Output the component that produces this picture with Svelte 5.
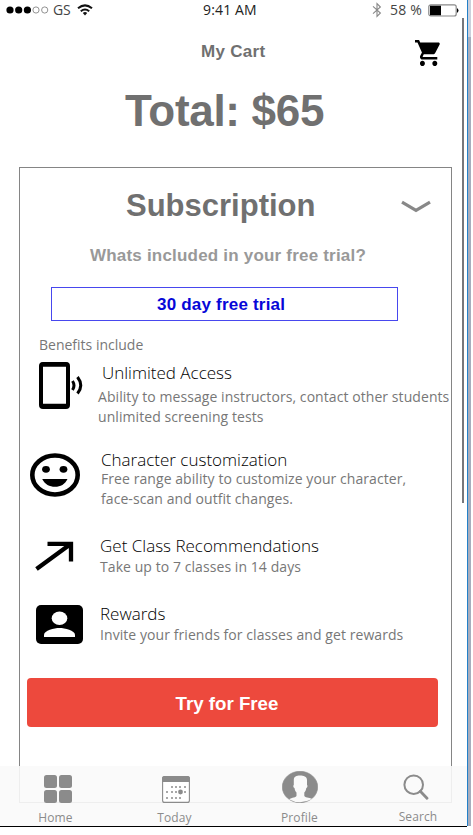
<script>
  const benefits = [
    { icon: 'phone', title: 'Unlimited Access', lines: ['Ability to message instructors, contact other students', 'unlimited screening tests'] },
    { icon: 'smile', title: 'Character customization', lines: ['Free range ability to customize your character,', 'face-scan and outfit changes.'] },
    { icon: 'arrow', title: 'Get Class Recommendations', lines: ['Take up to 7 classes in 14 days'] },
    { icon: 'person', title: 'Rewards', lines: ['Invite your friends for classes and get rewards'] }
  ];
  const dots = [[10,11],[14,11],[18,11],[23,11],[5,16],[10,16],[14,16],[23,16],[5,22],[10,22],[14,22],[18,22]];
</script>

<div class="frame">
  <main class="screen">
    <div class="status">
      <div class="carrier">
        <svg width="43" height="8" viewBox="0 0 43 8"><g fill="#000"><circle cx="4" cy="4" r="3.6"/><circle cx="12.7" cy="4" r="3.6"/><circle cx="21.4" cy="4" r="3.6"/></g><g fill="#fff" stroke="#777" stroke-width=".8"><circle cx="30" cy="4" r="3.1"/><circle cx="38.7" cy="4" r="3.1"/></g></svg>
        <span>GS</span>
        <svg width="16" height="12" viewBox="0 0 16 12" fill="none" stroke="#111" stroke-width="2"><path d="M1 4.3Q8-1.6 15 4.3M3.8 7.2Q8 3.7 12.2 7.2"/><path d="M5.8 9Q8 7.2 10.2 9L8 11.5Z" fill="#111" stroke="none"/></svg>
      </div>
      <span class="time">9:41 AM</span>
      <div class="power">
        <svg width="10" height="16" viewBox="0 0 10 16" fill="none" stroke="#888" stroke-width="1.1"><path d="M1 4.4L8.4 11 5 14.5V1.5L8.4 5 1 11.6"/></svg>
        <span>58 %</span>
        <svg width="31" height="13" viewBox="0 0 31 13"><rect x=".8" y=".8" width="27.4" height="11.2" rx="2" fill="#fff" stroke="#888" stroke-width="1.2"/><path d="M2 1.7h11v9.6H2z"/><path d="M29 4q3 2.4 0 5z"/></svg>
      </div>
    </div>
    <header>
      <h1>My Cart</h1>
      <svg class="cart" width="26" height="26" viewBox="1 2 21 20" preserveAspectRatio="none"><path d="M7 18c-1.1 0-1.99.9-1.99 2S5.9 22 7 22s2-.9 2-2-.9-2-2-2zM1 2v2h2l3.6 7.59-1.35 2.45c-.16.28-.25.61-.25.96 0 1.1.9 2 2 2h12v-2H7.42c-.14 0-.25-.11-.25-.25l.03-.12.9-1.63h7.45c.75 0 1.41-.41 1.75-1.03l3.58-6.49c.08-.14.12-.31.12-.48 0-.55-.45-1-1-1H5.21l-.94-2H1zm16 16c-1.1 0-1.99.9-1.99 2s.89 2 1.99 2 2-.9 2-2-.9-2-2-2z"/></svg>
    </header>
    <div class="total">Total: $65</div>

    <section class="card">
      <div class="heading">
        <h2>Subscription</h2>
        <svg width="30" height="14" viewBox="0 0 30 14"><path d="M1 2.2L15 10.5 29 2.2" fill="none" stroke="#888" stroke-width="3.2"/></svg>
      </div>
      <p class="question">Whats included in your free trial?</p>
      <div class="trial"><span>30 day free trial</span></div>
      <p class="include">Benefits include</p>
      {#each benefits as b}
        <article class={b.icon}>
          <div class="icon">
            {#if b.icon === 'phone'}
              <svg width="46" height="49" viewBox="0 0 46 49"><rect x="3" y="3" width="27" height="43" rx="2" fill="none" stroke="#000" stroke-width="4"/><path d="M3 1.7h27v4H3zM3 42.7h27v4H3z"/><path d="M34.5 20q3 4.5 0 9M39.5 16q6.5 8.5 0 16.5" fill="none" stroke="#000" stroke-width="3"/></svg>
            {:else if b.icon === 'smile'}
              <svg width="50" height="44" viewBox="0 0 50 44"><ellipse cx="25" cy="22" rx="22.7" ry="19.5" fill="none" stroke="#000" stroke-width="4.6"/><ellipse cx="16" cy="16.3" rx="3.9" ry="3.4"/><ellipse cx="33.5" cy="16.3" rx="3.9" ry="3.4"/><path d="M12.2 26h25.3C35 31.3 30.5 33.8 25 33.8S14.8 31.3 12.2 26z"/></svg>
            {:else if b.icon === 'arrow'}
              <svg width="39" height="30" viewBox="0 0 39 30"><path d="M12.5 2.8H36V20.5M36 2.8L1.5 28" fill="none" stroke="#000" stroke-width="4.3"/></svg>
            {:else}
              <svg width="47" height="39" viewBox="0 0 47 39"><rect width="47" height="39" rx="5"/><ellipse cx="23.5" cy="13.3" rx="7.8" ry="6.8" fill="#fff"/><path d="M8 32v-2.2C8 25.5 18.3 23 23.5 23S39 25.5 39 29.8V32z" fill="#fff"/></svg>
            {/if}
          </div>
          <div class="copy">
            <h3>{b.title}</h3>
            {#each b.lines as line}<p>{line}</p>{/each}
          </div>
        </article>
      {/each}
      <button>Try for Free</button>
    </section>

    <nav>
      <div class="tab home">
        <svg width="28" height="28" viewBox="0 0 28 28" fill="#8b8b8b"><rect width="13" height="13" rx="2.5"/><rect x="15" width="13" height="13" rx="2.5"/><rect y="15" width="13" height="13" rx="2.5"/><rect x="15" y="15" width="13" height="13" rx="2.5"/></svg>
        <span>Home</span>
      </div>
      <div class="tab today">
        <svg width="28" height="27" viewBox="0 0 28 27" fill="#8b8b8b"><rect x=".6" y=".6" width="26.8" height="25.8" rx="2" fill="#fff" stroke="#8b8b8b" stroke-width="1.1"/><path d="M0 2.5Q0 0 2.5 0h23Q28 0 28 2.5V6H0z"/>{#each dots as [x, y]}<circle cx={x} cy={y} r="1"/>{/each}<circle cx="18.5" cy="16" r="2.4"/></svg>
        <span>Today</span>
      </div>
      <div class="tab profile">
        <svg width="36" height="32" viewBox="0 0 36 32"><ellipse cx="18" cy="16" rx="17.7" ry="15.7" fill="#8b8b8b" stroke="#8b8b8b" stroke-width=".6"/><path d="M11.8 9C11.8 5.6 14.5 4.5 18 4.5S25 5.6 25 9v5c.8 0 .5 3-.7 3-.3 2-1 3.5-2 4.5v3.2c0 1.8 5 1.7 7.8 3.3Q24 31.2 18 31.2T7 28.2c2.8-1.8 7.5-1.6 7.5-3.5v-3.2c-1-1-1.7-2.5-2-4.5-1.2 0-1.5-3-.7-3z" fill="#fafafa"/></svg>
        <span>Profile</span>
      </div>
      <div class="tab search">
        <svg width="26" height="26" viewBox="0 0 26 26" fill="none" stroke="#8b8b8b"><circle cx="10.7" cy="10.7" r="9.3" stroke-width="2"/><path d="M17.3 17.3L24 24.3" stroke-width="2.8" stroke-linecap="round"/></svg>
        <span>Search</span>
      </div>
    </nav>
    <div class="scrollbar"></div>
  </main>
  <aside></aside>
</div>

<style>
  :global(body) { background: #fff; }
  h1, h2, h3, p { margin: 0; font-weight: normal; }
  svg { display: block; flex: none; }
  .frame { display: flex; width: 471px; height: 827px; }
  .screen { position: relative; box-sizing: border-box; width: 467px; height: 827px; border-bottom: 1px solid #000; background: #fff; font-family: "Open Sans", "Noto Sans", sans-serif; white-space: nowrap; overflow: hidden; }
  aside { box-sizing: border-box; width: 4px; height: 826px; border-left: 1px solid #2380c8; background: linear-gradient(#cbd0dc 37px, #a7adbd 37px); }
  .status { display: flex; height: 20px; font-size: 14px; line-height: 20px; }
  .carrier { display: flex; align-items: center; width: 203px; padding-left: 6px; box-sizing: border-box; color: #444; }
  .carrier span { width: 24px; margin-left: 4px; letter-spacing: -.1px; }
  .time { width: 169px; color: #222; letter-spacing: .15px; }
  .power { display: flex; align-items: center; color: #444; }
  .power span { width: 38px; margin-left: 8px; letter-spacing: .2px; }
  header { display: flex; height: 64px; }
  h1 { width: 213px; padding-left: 201px; font: bold 17px/64px "Liberation Sans", sans-serif; letter-spacing: .3px; color: #707070; }
  .cart { margin: 20px 0 0 1px; }
  .total { height: 83px; padding-left: 125px; font: bold 44px/53px "Liberation Sans", sans-serif; color: #707070; letter-spacing: -.3px; }
  .card { box-sizing: border-box; width: 433px; height: 636px; margin-left: 19px; border: 1px solid #858585; }
  .heading { display: flex; height: 72px; align-items: center; padding-left: 106px; }
  h2 { width: 275px; font: bold 31px/72px "Liberation Sans", sans-serif; color: #707070; padding-top: 3px; }
  .heading svg { margin-top: 5px; }
  .question { height: 47px; padding-left: 70px; font: bold 17px/31px "Liberation Sans", sans-serif; color: #999; letter-spacing: .2px; }
  .trial { box-sizing: border-box; width: 347px; height: 34px; margin-left: 31px; padding-left: 105px; border: 1px solid #4747ee; font: bold 17px/34px "Liberation Sans", sans-serif; color: #0707d8; letter-spacing: .2px; }
  .include { height: 40px; padding-left: 19px; font-size: 14px; line-height: 47px; color: #777; letter-spacing: 0; }
  article { display: flex; box-sizing: border-box; }
  .icon { width: 81px; flex: none; box-sizing: border-box; }
  h3 { font-size: 17px; line-height: 22px; color: #000; font-weight: 300; }
  .copy p { font-size: 14px; line-height: 20px; color: #777; letter-spacing: .07px; }
  .phone { height: 92px; }
  .phone .icon { padding-left: 18px; width: 78px; }
  .phone h3 { padding-left: 4px; height: 25px; }
  .phone .copy { margin-top: 1px; }
  .smile { height: 85px; }
  .smile .icon { padding: 0 0 0 10px; }
  .smile .copy { margin-top: -4px; }
  .smile h3 { height: 20px; }
  .arrow { height: 67px; }
  .arrow .icon { padding: 3px 0 0 15px; width: 80px; }
  .arrow .copy { margin-top: -3px; }
  .arrow h3, .person h3 { height: 22px; }
  .person { height: 73px; }
  .person .icon { padding: 0 0 0 16px; width: 80px; }
  .person .copy { margin-top: -2px; }
  button { display: block; width: 411px; height: 49px; margin-left: 7px; padding: 2px 11px 0 0; border: 0; border-radius: 4px; background: #ed493d; color: #fff; font: bold 18.7px/47px "Liberation Sans", sans-serif; }
  nav { position: absolute; left: 0; right: 0; bottom: 0; height: 60px; display: flex; background: rgba(249, 249, 249, .9); }
  .tab { display: flex; flex: none; flex-direction: column; align-items: center; font-size: 12px; line-height: 16px; color: #8b8b8b; letter-spacing: .1px; }
  .tab span { margin-top: 7px; }
  .home { width: 111px; }
  .home svg { margin: 9px 0 0 4px; }
  .today { width: 127px; }
  .today svg { margin: 10px 0 0 3px; }
  .profile { width: 123px; }
  .profile svg { margin: 5px 0 0 1px; }
  .search { width: 114px; }
  .search svg { margin: 8px 5px 0 0; }
  .search span { margin-top: 9px; }
  .scrollbar { position: absolute; left: 462px; top: 18px; width: 2px; height: 485px; background: #77777b; }
</style>
